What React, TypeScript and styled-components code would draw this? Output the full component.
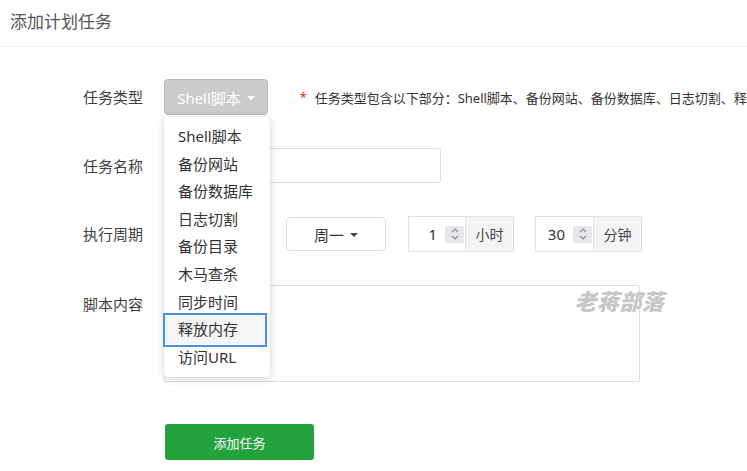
import React from "react";
import styled, { createGlobalStyle } from "styled-components";

const Global = createGlobalStyle`
    html, body {
        margin: 0;
        padding: 0;
        background: #fff;
        overflow: hidden;
    }
    body {
        font-family: "Noto Sans", "Noto Sans CJK SC", sans-serif;
        color: #333;
    }
`;

const Page = styled.div`
    position: relative;
    width: 747px;
    height: 471px;
    overflow: hidden;
`;

const Header = styled.div`
    height: 46px;
    line-height: 44px;
    padding-left: 10px;
    font-size: 17px;
    color: #555;
    border-bottom: 1px solid #f0f0f0;
`;

const Form = styled.div`
    padding: 32px 0 0 83px;
    display: flex;
    flex-direction: column;
`;

const Row = styled.div<{ $top?: boolean }>`
    display: flex;
    align-items: ${(p) => (p.$top ? "flex-start" : "center")};
    gap: 21px;
    margin-bottom: 33px;
`;

const Label = styled.div<{ $top?: boolean }>`
    width: 60px;
    flex-shrink: 0;
    font-size: 15px;
    line-height: 20px;
    color: #3f3f3f;
    padding-top: ${(p) => (p.$top ? "9px" : "0")};
`;

const Field = styled.div`
    display: flex;
    align-items: center;
    white-space: nowrap;
`;

const SelectWrap = styled.div`
    position: relative;
`;

const SelectBtn = styled.div<{ $muted?: boolean; $w: number; $h: number }>`
    box-sizing: border-box;
    width: ${(p) => p.$w}px;
    height: ${(p) => p.$h}px;
    display: flex;
    align-items: center;
    justify-content: center;
    font-size: 15px;
    border-radius: 4px;
    border: 1px solid ${(p) => (p.$muted ? "#b9b9b9" : "#ddd")};
    background: ${(p) => (p.$muted ? "#cbcbcb" : "#fff")};
    color: ${(p) => (p.$muted ? "#fff" : "#333")};
`;

const Caret = styled.span<{ $light?: boolean }>`
    display: inline-block;
    margin-left: 6px;
    margin-top: 2px;
    width: 0;
    height: 0;
    border-left: 4px solid transparent;
    border-right: 4px solid transparent;
    border-top: 4px solid ${(p) => (p.$light ? "#fff" : "#444")};
`;

const Menu = styled.ul`
    position: absolute;
    left: 0;
    top: 38px;
    z-index: 5;
    box-sizing: border-box;
    width: 106px;
    margin: 0;
    padding: 6px 0;
    list-style: none;
    background: #fff;
    border-radius: 4px;
    box-shadow: 0 2px 8px rgba(0, 0, 0, 0.18), 0 0 1px rgba(0, 0, 0, 0.12);
`;

const Item = styled.li<{ $active?: boolean }>`
    position: relative;
    height: 27.6px;
    line-height: 27.6px;
    padding-left: 14px;
    font-size: 15px;
    color: #333;
    background: ${(p) => (p.$active ? "#f5f5f5" : "transparent")};
    &::after {
        content: "";
        display: ${(p) => (p.$active ? "block" : "none")};
        position: absolute;
        left: -1px;
        right: 3px;
        top: -3px;
        bottom: -3px;
        border: 2px solid #4a90e2;
    }
`;

const Hint = styled.div`
    margin-left: 32px;
    font-size: 13px;
    color: #333;
    display: flex;
    align-items: center;
`;

const Star = styled.span`
    color: #e02020;
    margin-right: 8px;
    font-size: 12px;
`;

const TextInput = styled.div<{ $w: number; $h: number }>`
    box-sizing: border-box;
    width: ${(p) => p.$w}px;
    height: ${(p) => p.$h}px;
    border: 1px solid #dedede;
    border-radius: 2px;
    background: #fff;
`;

const Group = styled.div<{ $ml: number }>`
    display: flex;
    box-sizing: border-box;
    height: 36px;
    margin-left: ${(p) => p.$ml}px;
    border: 1px solid #e2e2e2;
`;

const NumBox = styled.div<{ $w: number }>`
    width: ${(p) => p.$w}px;
    display: flex;
    align-items: center;
    justify-content: flex-end;
    padding-right: 1px;
    box-sizing: border-box;
    font-size: 15px;
    color: #333;
`;

const Spin = styled.div`
    display: flex;
    align-items: center;
    justify-content: center;
    width: 19px;
    height: 17px;
    margin-left: 8px;
    background: #e8e8ec;
    border-radius: 1px;
`;

const Addon = styled.div`
    width: 47px;
    display: flex;
    align-items: center;
    justify-content: center;
    font-size: 14px;
    color: #444;
    background: #f4f4f4;
    border-left: 1px solid #e6e6e6;
`;

const SubmitBtn = styled.button`
    width: 149px;
    height: 36px;
    margin: 9px 0 0 82px;
    border: none;
    border-radius: 3px;
    background: #23a33d;
    color: #fff;
    font-family: "Noto Sans CJK SC", sans-serif;
    font-size: 13px;
`;

const Watermark = styled.div`
    position: absolute;
    left: 577px;
    top: 284px;
    font-family: "Noto Sans CJK SC", sans-serif;
    font-size: 22px;
    font-weight: 900;
    letter-spacing: 0.5px;
    color: #c6c6c6;
    transform: skewX(-14deg);
`;

const Chevrons = () => (
    <svg width="10" height="14" viewBox="0 0 10 14" fill="none" stroke="#8a8a90" strokeWidth="1.2">
        <path d="M2 5 L5 2 L8 5" />
        <path d="M2 9 L5 12 L8 9" />
    </svg>
);

const types = ["Shell脚本", "备份网站", "备份数据库", "日志切割", "备份目录", "木马查杀", "同步时间", "释放内存", "访问URL"];

const App = () => {
    return (
        <Page>
            <Global />
            <Header>添加计划任务</Header>
            <Form>
                <Row>
                    <Label>任务类型</Label>
                    <Field>
                        <SelectWrap>
                            <SelectBtn $muted $w={104} $h={36}>
                                Shell脚本
                                <Caret $light />
                            </SelectBtn>
                            <Menu>
                                {types.map((t) => (
                                    <Item key={t} $active={t === "释放内存"}>
                                        {t}
                                    </Item>
                                ))}
                            </Menu>
                        </SelectWrap>
                        <Hint>
                            <Star>*</Star>
                            任务类型包含以下部分：Shell脚本、备份网站、备份数据库、日志切割、释放内存、访问URL
                        </Hint>
                    </Field>
                </Row>
                <Row>
                    <Label>任务名称</Label>
                    <TextInput $w={277} $h={35} />
                </Row>
                <Row>
                    <Label>执行周期</Label>
                    <Field>
                        {/* cycle select, hidden under the open menu */}
                        <SelectBtn $w={106} $h={34} />
                        <SelectWrap style={{ marginLeft: 16 }}>
                            <SelectBtn $w={100} $h={34}>
                                周一
                                <Caret />
                            </SelectBtn>
                        </SelectWrap>
                        <Group $ml={22}>
                            <NumBox $w={56}>
                                1
                                <Spin>
                                    <Chevrons />
                                </Spin>
                            </NumBox>
                            <Addon>小时</Addon>
                        </Group>
                        <Group $ml={21}>
                            <NumBox $w={57}>
                                30
                                <Spin>
                                    <Chevrons />
                                </Spin>
                            </NumBox>
                            <Addon>分钟</Addon>
                        </Group>
                    </Field>
                </Row>
                <Row $top>
                    <Label $top>脚本内容</Label>
                    <TextInput $w={476} $h={97} />
                </Row>
                <SubmitBtn>添加任务</SubmitBtn>
            </Form>
            <Watermark>老蒋部落</Watermark>
        </Page>
    );
};

export default App;
